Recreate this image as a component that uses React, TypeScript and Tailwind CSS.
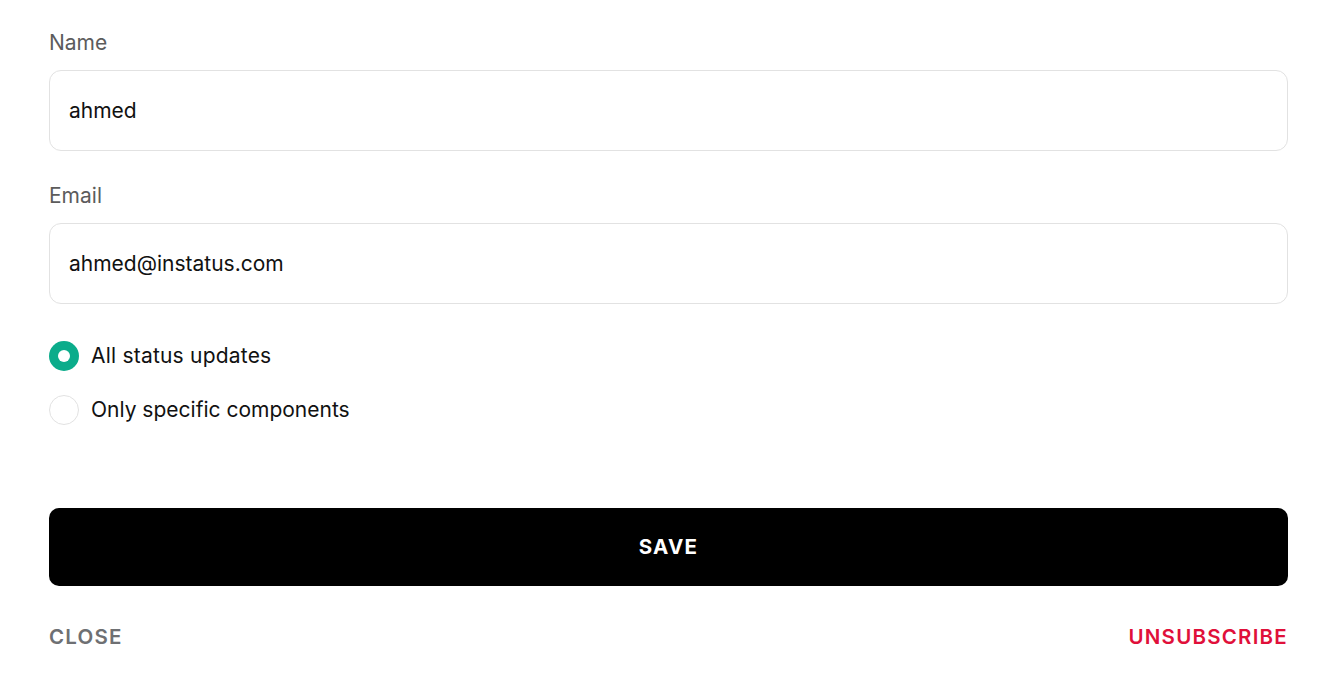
import React from "react";

export default function App() {
  const font = { fontFamily: "Inter, 'Noto Sans', sans-serif" };
  return (
    <div className="min-h-[681px] bg-white pl-[49px] pr-[45px] pt-[31px]" style={font}>
      <div className="flex flex-col">
        <label className="text-[21px] leading-[24px] text-[#5c5c5c]">Name</label>
        <div className="mt-[15px] flex h-[81px] items-center rounded-[12px] border border-[#e2e2e2] px-[19px] text-[21px] text-[#111]">
          ahmed
        </div>
        <label className="mt-[33px] text-[21px] leading-[24px] text-[#5c5c5c]">Email</label>
        <div className="mt-[15px] flex h-[81px] items-center rounded-[12px] border border-[#e2e2e2] px-[19px] text-[21px] text-[#111]">
          ahmed@instatus.com
        </div>
        <div className="mt-[37px] flex h-[30px] items-center gap-[12px]">
          <span className="flex h-[30px] w-[30px] items-center justify-center rounded-full bg-[#0bac8b]">
            <span className="h-[12px] w-[12px] rounded-full bg-white" />
          </span>
          <span className="text-[21px] leading-[30px] tracking-[0.01em] text-[#111]">All status updates</span>
        </div>
        <div className="mt-[24px] flex h-[30px] items-center gap-[12px]">
          <span className="h-[30px] w-[30px] rounded-full border border-[#e2e2e2]" />
          <span className="text-[21px] leading-[30px] text-[#111]">Only specific components</span>
        </div>
        <button className="mt-[83px] flex h-[78px] items-center justify-center rounded-[10px] bg-black text-[20.5px] font-bold tracking-[0.06em] text-white">
          SAVE
        </button>
        <div className="mt-[39px] flex items-center justify-between leading-[24px]">
          <span className="text-[20.5px] font-semibold tracking-[0.06em] text-[#6e7073]">CLOSE</span>
          <span className="text-[20.5px] font-semibold tracking-[0.06em] text-[#e0103a]">UNSUBSCRIBE</span>
        </div>
      </div>
    </div>
  );
}
